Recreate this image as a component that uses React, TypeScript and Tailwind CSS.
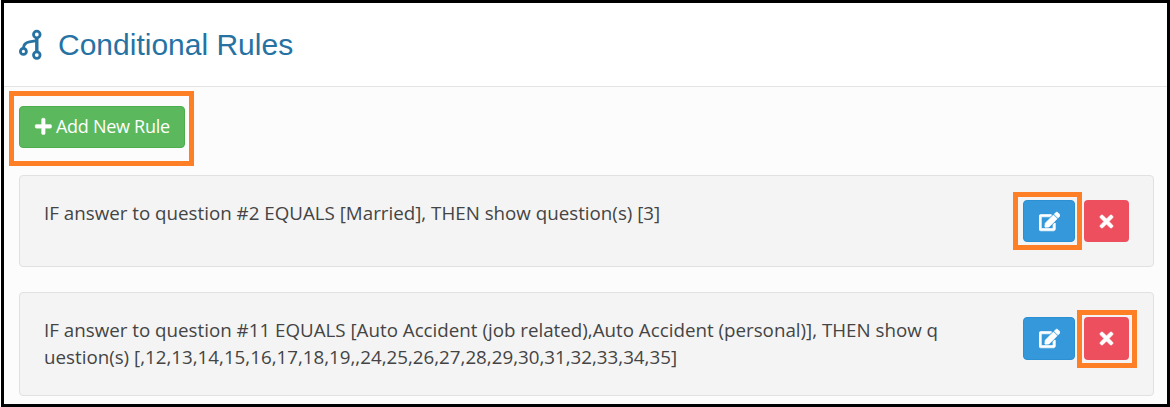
import React from 'react';
import { FaPlus, FaEdit, FaTimes } from 'react-icons/fa';

const rules = [
  { lines: ['IF answer to question #2 EQUALS [Married], THEN show question(s) [3]'], mark: 'edit' },
  {
    lines: [
      'IF answer to question #11 EQUALS [Auto Accident (job related),Auto Accident (personal)], THEN show q',
      'uestion(s) [,12,13,14,15,16,17,18,19,,24,25,26,27,28,29,30,31,32,33,34,35]',
    ],
    mark: 'delete',
  },
];

function Highlight({ className }: { className: string }) {
  return <span className={`pointer-events-none absolute border-[5px] border-[#ff7f27] ${className}`} />;
}

export default function App() {
  return (
    <div className="h-[407px] w-[1170px] bg-white pl-px">
      <div className="h-full overflow-hidden border-[3px] border-black bg-[#fcfcfc] font-['Open_Sans',sans-serif] text-[#444]">
        <header className="flex h-[84px] items-center border-b border-[#e4e4e4] bg-white pl-[15px]">
          <svg className="h-[32px] w-[24px] shrink-0" viewBox="0 0 24 32" fill="none" stroke="#2672a3" strokeWidth="2.8">
            <circle cx="17.8" cy="5.5" r="3.3" />
            <circle cx="4.4" cy="22.4" r="3" />
            <circle cx="17.8" cy="26.1" r="3.3" />
            <path d="M17.8 9v14" strokeWidth="3.4" />
            <path d="M17.8 11.6L10.4 12.8Q4.6 13.8 4.4 19.2" />
          </svg>
          <h1 className="ml-[15px] font-['Liberation_Sans',sans-serif] text-[30px] leading-9 text-[#2672a3]">Conditional Rules</h1>
        </header>
        <main className="pt-[19px] pr-[13px] pl-[15px]">
          <div className="relative w-fit">
            <button className="flex h-[42px] w-[166px] items-center justify-center gap-[3px] rounded-[4px] border border-[#4cae4c] bg-[#5cb85c] pb-[2px] text-[18px] tracking-[-0.28px] text-white">
              <FaPlus className="size-[18.75px]" strokeWidth={12} />
              Add New Rule
            </button>
            <Highlight className="-top-[15px] -left-[10px] h-[75px] w-[185px]" />
          </div>
          <div className="mt-[27px] flex flex-col gap-[25px]">
            {rules.map((rule, i) => (
              <section key={i} className={`flex justify-between rounded-[4px] border border-[#e1e1e1] bg-[#f4f4f4] pt-[24px] pr-[24px] pl-[24px] ${i === 0 ? 'h-[92px]' : 'h-[104px]'}`}>
                <div className="-mt-px text-[18.75px] leading-[27px] whitespace-nowrap">
                  {rule.lines.map((line) => <p key={line}>{line}</p>)}
                </div>
                <div className={`flex gap-[9px] ${i === 0 ? 'h-[42px]' : 'h-[43px]'}`}>
                  <div className="relative">
                    <button className="flex h-full w-[52px] items-center justify-center rounded-[4px] border border-[#2a8fd3] bg-[#3498db] text-white">
                      <FaEdit className="size-[21px]" strokeWidth={18} />
                    </button>
                    {rule.mark === 'edit' && <Highlight className="-top-[8px] -left-[10px] h-[58px] w-[69px]" />}
                  </div>
                  <div className="relative">
                    <button className="flex h-full w-[45px] items-center justify-center rounded-[4px] bg-[#ed4f5f] text-white">
                      <FaTimes className="size-[19px]" strokeWidth={20} />
                    </button>
                    {rule.mark === 'delete' && <Highlight className="-top-[7px] -left-[7px] h-[58px] w-[60px]" />}
                  </div>
                </div>
              </section>
            ))}
          </div>
        </main>
      </div>
    </div>
  );
}
